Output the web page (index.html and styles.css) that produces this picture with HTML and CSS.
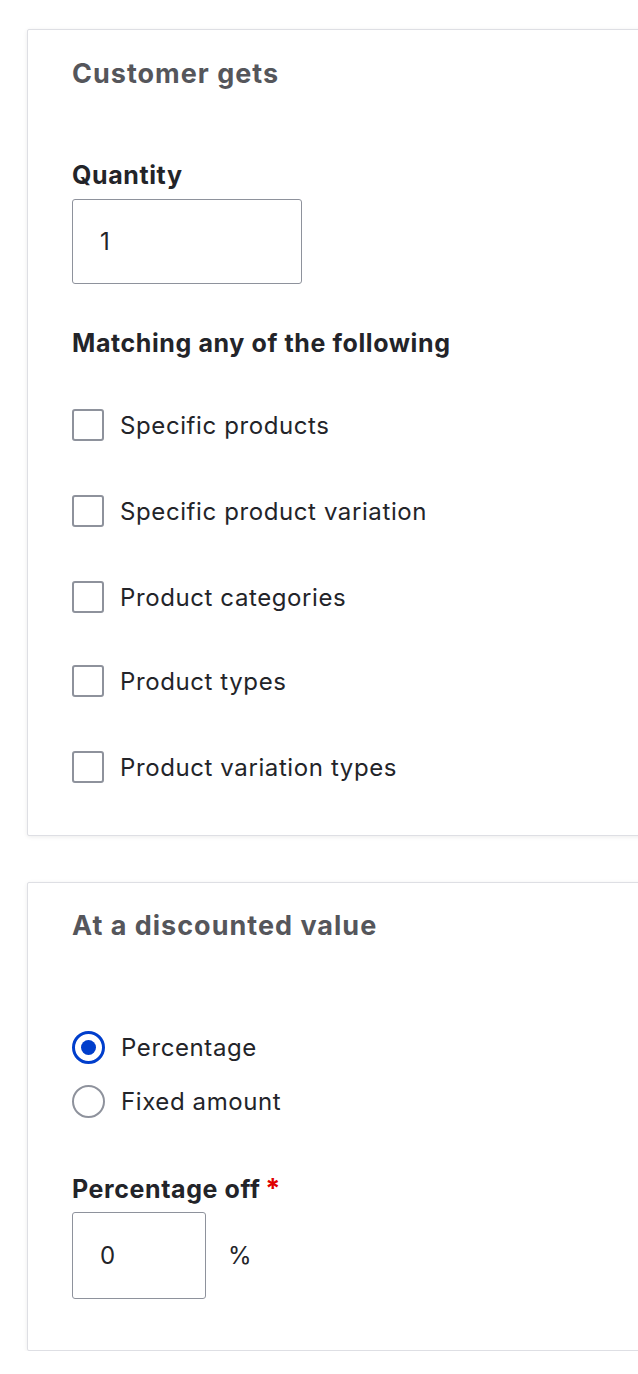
FILE: index.html
```html
<!DOCTYPE html>
<html lang="en">
<head>
<meta charset="utf-8">
<title>Customer gets</title>
<link rel="stylesheet" href="styles.css">
</head>
<body>
<section class="card card-gets">
  <h2 class="card-title">Customer gets</h2>
  <label class="field-label label-qty" for="qty">Quantity</label>
  <input id="qty" class="text-input input-qty" type="text" value="1">
  <div class="field-label label-match">Matching any of the following</div>
  <ul class="checks">
    <li class="check-row"><span class="checkbox"></span><span class="opt-text">Specific products</span></li>
    <li class="check-row"><span class="checkbox"></span><span class="opt-text">Specific product variation</span></li>
    <li class="check-row"><span class="checkbox"></span><span class="opt-text">Product categories</span></li>
    <li class="check-row row-tight"><span class="checkbox"></span><span class="opt-text">Product types</span></li>
    <li class="check-row"><span class="checkbox"></span><span class="opt-text">Product variation types</span></li>
  </ul>
</section>
<section class="card card-value">
  <h2 class="card-title">At a discounted value</h2>
  <ul class="radios">
    <li class="radio-row"><span class="radio radio-on"></span><span class="opt-text">Percentage</span></li>
    <li class="radio-row"><span class="radio"></span><span class="opt-text">Fixed amount</span></li>
  </ul>
  <div class="field-label label-pct">Percentage off <span class="req">*</span></div>
  <div class="pct-row">
    <input class="text-input input-pct" type="text" value="0">
    <span class="suffix">%</span>
  </div>
</section>
</body>
</html>
```
FILE: styles.css
```css
html, body {
  margin: 0;
  padding: 0;
  background: #ffffff;
  overflow-x: hidden;
}
body {
  font-family: Inter, "Noto Sans", "Liberation Sans", sans-serif;
  color: #232429;
  padding-top: 29px;
  padding-left: 27px;
}
.card {
  border: 1px solid #dedfe4;
  border-radius: 2px;
  background: #fff;
  box-shadow: 0 1px 4px rgba(0, 0, 0, 0.08);
  margin-right: -30px;
  padding: 0 0 0 44px;
  display: flex;
  flex-direction: column;
  align-items: flex-start;
}
.card-gets {
  padding-top: 28px;
  padding-bottom: 52px;
}
.card-value {
  margin-top: 46px;
  padding-top: 27px;
  padding-bottom: 51px;
}
.card-title {
  margin: 0;
  font-size: 27px;
  line-height: 32px;
  font-weight: 700;
  color: #55565b;
  letter-spacing: 1px;
}
.field-label {
  display: block;
  font-size: 25px;
  line-height: 28px;
  font-weight: 700;
  color: #232429;
  letter-spacing: 0.6px;
}
.label-qty { margin-top: 71px; }
.label-match { margin-top: 45px; }
.label-pct { margin-top: 58px; }
.req {
  color: #e00000;
  font-weight: 700;
  font-size: 27px;
  margin-left: -2px;
}
.text-input {
  box-sizing: border-box;
  font-family: inherit;
  font-size: 24px;
  letter-spacing: 0.5px;
  color: #232429;
  border: 1.75px solid #8e929c;
  border-radius: 3px;
  padding: 0 0 0 27px;
  background: #fff;
  outline: none;
}
.input-qty {
  margin-top: 10px;
  width: 230px;
  height: 85px;
}
.pct-row {
  margin-top: 9px;
  display: flex;
  align-items: center;
  gap: 22px;
}
.input-pct {
  width: 134px;
  height: 87px;
}
.suffix {
  font-size: 24px;
  color: #232429;
}
.checks, .radios {
  list-style: none;
  margin: 0;
  padding: 0;
  display: flex;
  flex-direction: column;
}
.checks { margin-top: 52px; gap: 54px; }
.radios { margin-top: 89px; gap: 22px; }
.check-row, .radio-row {
  display: flex;
  align-items: center;
  height: 32px;
}
.row-tight { margin-top: -2px; }
.checkbox {
  box-sizing: border-box;
  width: 32px;
  height: 32px;
  border: 2px solid #8e929c;
  border-radius: 3px;
  flex: none;
}
.radio {
  box-sizing: border-box;
  width: 33px;
  height: 33px;
  border: 2px solid #8e929c;
  border-radius: 50%;
  flex: none;
  display: flex;
  align-items: center;
  justify-content: center;
}
.radio-on {
  border: 3.5px solid #003ecc;
}
.radio-on::after {
  content: "";
  width: 15px;
  height: 15px;
  border-radius: 50%;
  background: #003ecc;
}
.opt-text {
  margin-left: 16px;
  padding-top: 2px;
  font-size: 24px;
  line-height: 28px;
  letter-spacing: 0.6px;
  color: #232429;
}
```
